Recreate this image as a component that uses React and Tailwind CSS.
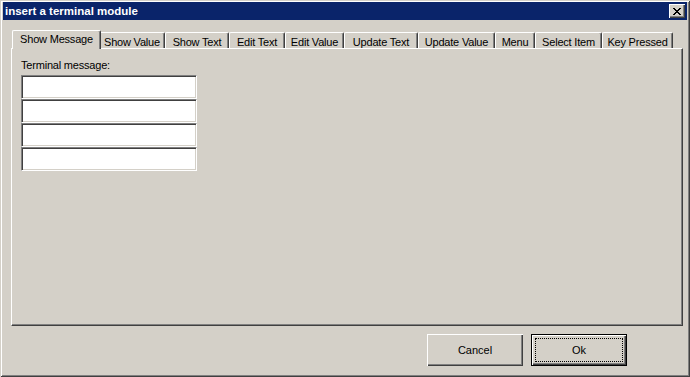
import React from "react";

const tabs = [
  { label: "Show Message", w: 85 },
  { label: "Show Value", w: 66 },
  { label: "Show Text", w: 64 },
  { label: "Edit Text", w: 56 },
  { label: "Edit Value", w: 59 },
  { label: "Update Text", w: 74 },
  { label: "Update Value", w: 77 },
  { label: "Menu", w: 40 },
  { label: "Select Item", w: 67 },
  { label: "Key Pressed", w: 71 },
];

function Tab({ label, w, selected }) {
  if (selected) {
    return (
      <div
        style={{ width: w + 4 }}
        className="relative z-10 -mx-[2px] -mb-[1px] h-[19px] bg-[#d4d0c8] border-t border-l border-white border-r border-r-[#404040] rounded-t-[2px] shadow-[inset_-1px_0_0_#808080] flex justify-center pt-[2px] leading-[13px] tracking-[-0.2px]"
      >
        {label}
      </div>
    );
  }
  return (
    <div
      style={{ width: w }}
      className="h-[16px] bg-[#d4d0c8] border-t border-l border-white border-r border-r-[#404040] rounded-t-[2px] shadow-[inset_-1px_0_0_#808080] flex justify-center pt-[3px] leading-[13px] tracking-[-0.2px]"
    >
      {label}
    </div>
  );
}

function TextBox() {
  return (
    <div className="w-[176px] h-[24px] bg-white border-t border-l border-t-[#808080] border-l-[#808080] border-b border-r border-b-white border-r-white shadow-[inset_1px_1px_0_#404040,inset_-1px_-1px_0_#d4d0c8]" />
  );
}

export default function App() {
  return (
    <div
      className="w-[690px] h-[377px] bg-[#d4d0c8] flex flex-col pt-[2px] px-[3px] text-[11px] text-black shadow-[inset_1px_1px_0_#d4d0c8,inset_-1px_-1px_0_#404040,inset_2px_2px_0_#ffffff,inset_-2px_-2px_0_#808080] overflow-hidden"
      style={{ fontFamily: '"Liberation Sans", Arial, sans-serif' }}
    >
      {/* Title bar */}
      <div className="h-[18px] bg-[#0a246a] flex items-center justify-between pl-[2px] pr-[2px]">
        <span className="text-white font-bold text-[11.5px] leading-[14px]">insert a terminal module</span>
        <div className="w-[16px] h-[14px] bg-[#d4d0c8] shadow-[inset_1px_1px_0_#ffffff,inset_-1px_-1px_0_#404040,inset_-2px_-2px_0_#808080] flex items-center justify-center">
          <svg width="8" height="7" viewBox="0 0 8 7" shapeRendering="crispEdges">
            <path d="M0 0h2v1H0zM6 0h2v1H6zM1 1h2v1H1zM5 1h2v1H5zM2 2h4v1H2zM3 3h2v1H3zM2 4h4v1H2zM1 5h2v1H1zM5 5h2v1H5zM0 6h2v1H0zM6 6h2v1H6z" fill="#000" />
          </svg>
        </div>
      </div>

      {/* Tab control */}
      <div className="mt-[10px] ml-[8px] w-[672px] flex flex-col">
        <div className="h-[18px] flex items-end pl-[3px]">
          {tabs.map((t, i) => (
            <Tab key={t.label} label={t.label} w={t.w} selected={i === 0} />
          ))}
        </div>
        <div className="h-[278px] border-t border-l border-white border-r border-b border-r-[#404040] border-b-[#404040] shadow-[inset_-1px_-1px_0_#808080] pl-[9px] pt-[10px] flex flex-col">
          <div className="leading-[13px] h-[16px] tracking-[-0.2px]">Terminal message:</div>
          <div className="flex flex-col">
            <TextBox />
            <TextBox />
            <TextBox />
            <TextBox />
          </div>
        </div>
      </div>

      {/* Buttons */}
      <div className="mt-[8px] flex justify-end gap-[8px] pr-[60px]">
        <button className="w-[96px] h-[32px] bg-[#d4d0c8] shadow-[inset_1px_1px_0_#ffffff,inset_-1px_-1px_0_#404040,inset_-2px_-2px_0_#808080] text-[11px] leading-[13px]">
          Cancel
        </button>
        <button className="w-[96px] h-[32px] bg-[#d4d0c8] border border-black shadow-[inset_1px_1px_0_#ffffff,inset_-1px_-1px_0_#404040,inset_-2px_-2px_0_#808080] text-[11px] leading-[13px] p-[3px] flex">
          <span className="flex-1 border border-dotted border-black flex items-center justify-center">Ok</span>
        </button>
      </div>
    </div>
  );
}
